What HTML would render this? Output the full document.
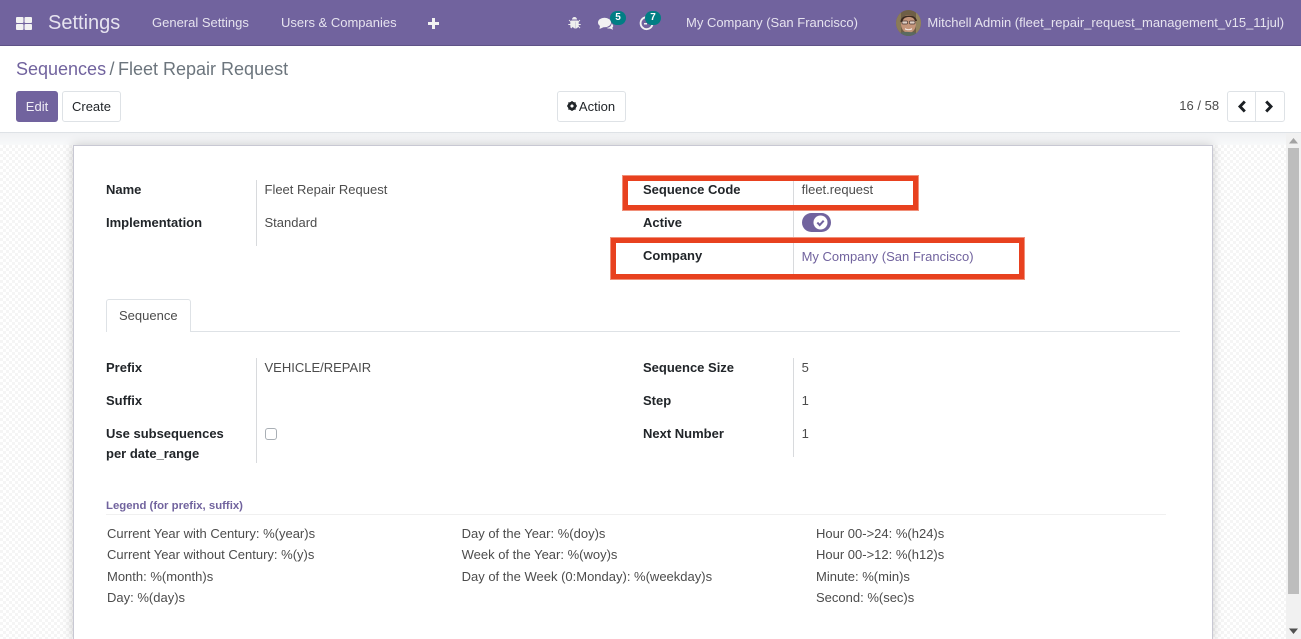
<!DOCTYPE html>
<html lang="en">
<head>
<meta charset="utf-8">
<title>Sequences / Fleet Repair Request</title>
<style>
html,body{margin:0;padding:0;width:1301px;height:639px;overflow:hidden;background:#fff;}
body{position:relative;font-family:"Liberation Sans",sans-serif;font-size:13px;color:#4c4c4c;}
.t{position:absolute;white-space:nowrap;line-height:16px;}
.b{font-weight:bold;color:#212529;}
.n{color:#e6e3ef;}
.v{position:absolute;width:1px;background:#d8dadd;}
#nav{position:absolute;left:0;top:0;width:1301px;height:45px;background:#71639e;border-bottom:1px solid #5f5387;}
#bg{position:absolute;left:0;top:133px;width:1286px;height:506px;background-color:#fff;
 background-image:repeating-conic-gradient(#f5f5f5 0 25%,#fff 0 50%);background-size:6px 6px;}
#bgtop{position:absolute;left:0;top:133px;width:1286px;height:12px;background:linear-gradient(#f0f1f3,#f8f9fa);}
#line{position:absolute;left:0;top:132px;width:1301px;height:1px;background:#dee2e6;}
#card{position:absolute;left:73px;top:145px;width:1138px;height:494px;background:#fff;border:1px solid #c8c8d3;border-bottom:0;box-sizing:content-box;box-shadow:0 0 10px rgba(0,0,0,.2);}
.btn{position:absolute;box-sizing:border-box;height:31px;border:1px solid #dee2e6;border-radius:3px;background:#fff;color:#212529;line-height:29px;text-align:center;}
.red{position:absolute;box-sizing:border-box;border:5px solid #e8411f;box-shadow:0 0 0 1px #f0907a;}
.badge{position:absolute;width:16px;height:14px;border-radius:7px;background:#017e84;color:#fff;font-size:10px;font-weight:bold;line-height:13px;text-align:center;}
</style>
</head>
<body>
<div id="nav"></div>
<svg style="position:absolute;left:16px;top:17px" width="16" height="13"><rect x="0" y="0" width="7.500" height="6" rx="1" fill="#f2f2f2"/><rect x="8.500" y="0" width="7.500" height="6" rx="1" fill="#f2f2f2"/><rect x="0" y="7" width="7.500" height="6" rx="1" fill="#f2f2f2"/><rect x="8.500" y="7" width="7.500" height="6" rx="1" fill="#f2f2f2"/></svg>
<div class="t n" style="left:48px;top:11px;font-size:20px;line-height:24px;">Settings</div>
<div class="t n" style="left:152px;top:15px;">General Settings</div>
<div class="t n" style="left:281px;top:15px;">Users &amp; Companies</div>
<svg style="position:absolute;left:428px;top:18px" width="11" height="11"><path d="M4 0h3v4h4v3H7v4H4V7H0V4h4z" fill="#f2f2f2"/></svg>
<svg style="position:absolute;left:568px;top:16px" width="13" height="14" viewBox="0 0 13 14"><path d="M4 3.500a2.500 2.500 0 0 1 5 0zM3.400 4.500h6.200l.6.600 1.400-1.400.7.700-1.600 1.600V8h2v1h-2v1l1.700 1.700-.7.700-1.500-1.500c-.6 1-1.500 1.600-2.600 1.700V5.800h-.2v6.800c-1.100-.1-2-.7-2.600-1.700l-1.500 1.500-.7-.7L2.300 10V9h-2V8h2V5.800L.7 4.400l.7-.7 1.400 1.400z" fill="#eee"/></svg>
<svg style="position:absolute;left:598px;top:17px" width="16" height="13" viewBox="0 0 16 13"><ellipse cx="6.500" cy="5.500" rx="6.500" ry="4.800" fill="#f2f2f2"/><path d="M2 8.500 1.500 12 6 10z" fill="#f2f2f2"/><path d="M13.500 6.500c2 1.500 2.200 3 .8 4.300l.7 2-3-1.300c-1.300.2-2.500 0-3.500-.7 3 0 5-1.600 5-4.300z" fill="#f2f2f2"/></svg>
<div class="badge" style="left:610px;top:11px;">5</div>
<svg style="position:absolute;left:639px;top:16px" width="15" height="15" viewBox="0 0 15 15"><path d="M7 1.200a6 6 0 1 0 6.500 7" fill="none" stroke="#f2f2f2" stroke-width="1.800"/><rect x="5" y="7" width="3" height="1.500" fill="#f2f2f2"/></svg>
<div class="badge" style="left:645px;top:11px;">7</div>
<div class="t n" style="left:686px;top:15px;">My Company (San Francisco)</div>
<svg style="position:absolute;left:896px;top:10px" width="25" height="26" viewBox="0 0 25 26"><defs><clipPath id="c"><ellipse cx="12.500" cy="13" rx="12.500" ry="13"/></clipPath></defs><g clip-path="url(#c)"><rect width="25" height="26" fill="#6f5f46"/><rect x="0" y="0" width="5" height="26" fill="#8a7a58"/><rect x="20" y="0" width="5" height="26" fill="#93845e"/><ellipse cx="12.500" cy="14" rx="7.500" ry="9" fill="#c4957a"/><path d="M4.500 12C4 4 20 3 21 11l-2 0c-1-3-3-4-6-4s-6 1-6.500 5z" fill="#3b2a20"/><rect x="6" y="11" width="5.500" height="3" rx="1" fill="#e0cfc4" stroke="#4a3a34" stroke-width=".7"/><rect x="13.500" y="11" width="5.500" height="3" rx="1" fill="#e0cfc4" stroke="#4a3a34" stroke-width=".7"/><path d="M9 18c2 1.500 5 1.500 7 0v1.500c-2 1-5 1-7 0z" fill="#f0e3dc"/><path d="M2 26c1-4 5-4.500 10.500-4s9.500 0 10.500 4z" fill="#5a6a60"/></g></svg>
<div class="t n" style="left:927.400px;top:15px;">Mitchell Admin (fleet_repair_request_management_v15_11jul)</div>

<div class="t" style="left:16px;top:58px;font-size:18px;line-height:22px;color:#71639e;">Sequences</div>
<div class="t" style="left:109.500px;top:58px;font-size:18px;line-height:22px;color:#6c757d;">/</div>
<div class="t" style="left:118px;top:58px;font-size:18px;line-height:22px;color:#6c757d;">Fleet Repair Request</div>

<div class="btn" style="left:16px;top:91px;width:42px;background:#71639e;border-color:#71639e;color:#f0eef6;">Edit</div>
<div class="btn" style="left:62px;top:91px;width:59px;">Create</div>
<div class="btn" style="left:557px;top:91px;width:69px;padding-left:11px;">Action</div>
<svg style="position:absolute;left:567px;top:101px" width="10" height="10" viewBox="0 0 10 10"><circle cx="5" cy="5" r="3.300" fill="none" stroke="#212529" stroke-width="2.200"/><path d="M5 0v10M0 5h10M1.500 1.500l7 7M8.500 1.500l-7 7" stroke="#212529" stroke-width="1.300"/><circle cx="5" cy="5" r="1.500" fill="#fff"/></svg>
<div class="t" style="left:1179.300px;top:98px;color:#4c4c4c;">16 / 58</div>
<div class="btn" style="left:1227px;top:91px;width:58px;"></div>
<div class="v" style="left:1255px;top:92px;height:29px;background:#dee2e6;"></div>
<svg style="position:absolute;left:1237px;top:100px" width="10" height="13" viewBox="0 0 10 13"><path d="M7.800 1.500 3 6.500l4.800 5" fill="none" stroke="#1b1f23" stroke-width="2.900"/></svg>
<svg style="position:absolute;left:1264px;top:100px" width="10" height="13" viewBox="0 0 10 13"><path d="M2.200 1.500 7 6.500l-4.800 5" fill="none" stroke="#1b1f23" stroke-width="2.900"/></svg>

<div id="line"></div>
<div id="bg"></div>
<div id="bgtop"></div>
<div id="card"></div>

<div style="position:absolute;left:1286px;top:133px;width:15px;height:506px;background:#f1f1f1;"></div>
<div style="position:absolute;left:1288px;top:148px;width:11px;height:446px;background:#bdbdbd;"></div>
<svg style="position:absolute;left:1289px;top:138px" width="9" height="6"><path d="M4.500 0 9 5.500H0z" fill="#a3a3a3"/></svg>
<svg style="position:absolute;left:1289px;top:628px" width="9" height="6"><path d="M0 .5h9L4.500 6z" fill="#505050"/></svg>

<div class="t b" style="left:106px;top:182px;">Name</div>
<div class="t b" style="left:106px;top:215px;">Implementation</div>
<div class="v" style="left:256px;top:180px;height:66px;"></div>
<div class="t" style="left:264.500px;top:182px;">Fleet Repair Request</div>
<div class="t" style="left:264.500px;top:215px;">Standard</div>

<div class="t b" style="left:643px;top:182px;">Sequence Code</div>
<div class="t b" style="left:643px;top:215px;">Active</div>
<div class="t b" style="left:643px;top:248px;">Company</div>
<div class="v" style="left:793px;top:180px;height:99px;"></div>
<div class="t" style="left:801.600px;top:182px;">fleet.request</div>
<div style="position:absolute;left:802px;top:213px;width:29px;height:19px;border-radius:10px;background:#71639e;"></div>
<svg style="position:absolute;left:813px;top:215px" width="15" height="15" viewBox="0 0 15 15"><circle cx="7.500" cy="7.500" r="7" fill="#fff"/><path d="M4.300 7.600 6.700 10l4-4.300" fill="none" stroke="#71639e" stroke-width="2"/></svg>
<div class="t" style="left:801.600px;top:249px;color:#71639e;">My Company (San Francisco)</div>

<div class="red" style="left:623px;top:176px;width:295px;height:34px;"></div>
<div class="red" style="left:611px;top:238px;width:413px;height:41px;"></div>

<div style="position:absolute;left:106px;top:331px;width:1074px;height:1px;background:#dee2e6;"></div>
<div style="position:absolute;box-sizing:border-box;left:106px;top:299px;width:85px;height:33px;background:#fff;border:1px solid #dee2e6;border-bottom:0;border-radius:3px 3px 0 0;"></div>
<div class="t" style="left:119px;top:308px;">Sequence</div>

<div class="t b" style="left:106px;top:360px;">Prefix</div>
<div class="t b" style="left:106px;top:393px;">Suffix</div>
<div class="t b" style="left:106px;top:426px;">Use subsequences</div>
<div class="t b" style="left:106px;top:446px;">per date_range</div>
<div class="v" style="left:256px;top:358px;height:105px;"></div>
<div class="t" style="left:264.500px;top:360px;">VEHICLE/REPAIR</div>
<div style="position:absolute;box-sizing:border-box;left:265px;top:428px;width:12px;height:12px;border:1px solid #a9afb5;border-radius:3px;background:#fff;"></div>

<div class="t b" style="left:643px;top:360px;">Sequence Size</div>
<div class="t b" style="left:643px;top:393px;">Step</div>
<div class="t b" style="left:643px;top:426px;">Next Number</div>
<div class="v" style="left:793px;top:358px;height:99px;"></div>
<div class="t" style="left:801.600px;top:360px;">5</div>
<div class="t" style="left:801.600px;top:393px;">1</div>
<div class="t" style="left:801.600px;top:426px;">1</div>

<div class="t" style="left:106px;top:498px;font-size:11.375px;font-weight:bold;color:#71639e;">Legend (for prefix, suffix)</div>
<div style="position:absolute;left:106px;top:514px;width:1060px;height:1px;background:#f0f0f0;"></div>

<div class="t" style="left:107px;top:526px;">Current Year with Century: %(year)s</div>
<div class="t" style="left:107px;top:547px;">Current Year without Century: %(y)s</div>
<div class="t" style="left:107px;top:569px;">Month: %(month)s</div>
<div class="t" style="left:107px;top:590px;">Day: %(day)s</div>

<div class="t" style="left:461.600px;top:526px;">Day of the Year: %(doy)s</div>
<div class="t" style="left:461.600px;top:547px;">Week of the Year: %(woy)s</div>
<div class="t" style="left:461.600px;top:569px;">Day of the Week (0:Monday): %(weekday)s</div>

<div class="t" style="left:816px;top:526px;">Hour 00-&gt;24: %(h24)s</div>
<div class="t" style="left:816px;top:547px;">Hour 00-&gt;12: %(h12)s</div>
<div class="t" style="left:816px;top:569px;">Minute: %(min)s</div>
<div class="t" style="left:816px;top:590px;">Second: %(sec)s</div>
</body>
</html>
